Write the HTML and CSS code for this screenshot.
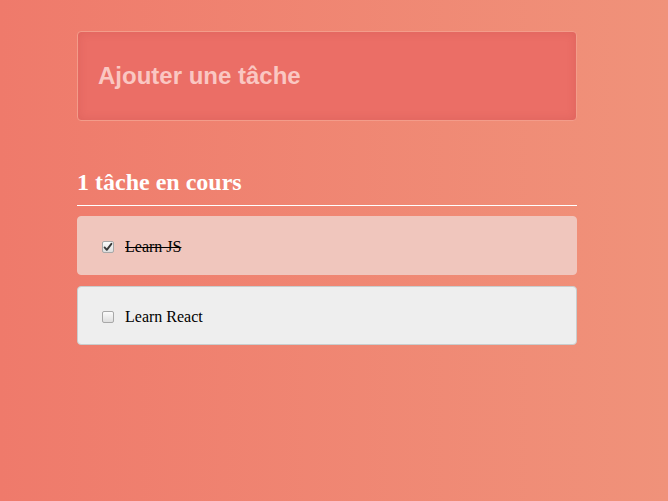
FILE: index.html
```html
<!DOCTYPE html>
<html lang="fr">
<head>
<meta charset="utf-8">
<title>Tâches</title>
<link rel="stylesheet" href="styles.css">
</head>
<body>
<main class="app">
  <div class="new-task">Ajouter une tâche</div>
  <h2 class="count">1 tâche en cours</h2>
  <ul class="list">
    <li class="item item-done">
      <span class="box"><svg viewBox="0 0 12 12" width="12" height="12"><path d="M2.6 6.4 L4.8 8.8 L9.4 2.8" fill="none" stroke="#3a3a3a" stroke-width="1.9" stroke-linecap="round" stroke-linejoin="round"/></svg></span>
      <span class="label">Learn JS</span>
    </li>
    <li class="item">
      <span class="box"></span>
      <span class="label">Learn React</span>
    </li>
  </ul>
</main>
</body>
</html>
```

FILE: styles.css
```css
html, body {
  margin: 0;
  height: 100%;
}
body {
  background: linear-gradient(to right, #ef7a6b, #f0927a);
  font-family: "Liberation Serif", "Times New Roman", serif;
}
.app {
  width: 500px;
  margin-left: 77px;
  padding-top: 31px;
}
.new-task {
  box-sizing: border-box;
  height: 90px;
  border: 1px solid #f39c8a;
  border-radius: 4px;
  background: #eb6e66;
  box-shadow: inset 0 0 10px rgba(160, 50, 50, 0.18);
  font-family: "Liberation Sans", Arial, sans-serif;
  font-weight: bold;
  font-size: 24px;
  color: #fac7c2;
  padding: 0 20px;
  display: flex;
  align-items: center;
}
.count {
  margin: 47px 0 10px;
  padding-bottom: 9px;
  border-bottom: 1px solid #ffffff;
  color: #ffffff;
  font-size: 24px;
  font-weight: bold;
  line-height: 28px;
}
.list {
  list-style: none;
  margin: 0;
  padding: 0;
  display: flex;
  flex-direction: column;
  gap: 11px;
}
.item {
  box-sizing: border-box;
  height: 59px;
  border-radius: 4px;
  border: 1px solid #c9cdcd;
  background: #eeeeee;
  display: flex;
  align-items: center;
  padding: 3px 24px 0;
  gap: 11px;
  font-size: 16px;
  color: #000;
}
.item-done {
  background: #f0c6bd;
  border-color: #f0c6bd;
}
.item-done .label {
  text-decoration: line-through;
}
.box {
  box-sizing: border-box;
  width: 12px;
  height: 12px;
  border: 1px solid #a8a8a8;
  border-radius: 2px;
  background: linear-gradient(#fbfbfb, #dedede);
  display: flex;
  align-items: center;
  justify-content: center;
  margin-top: -1px;
}
.box svg {
  display: block;
  flex: none;
}
```
